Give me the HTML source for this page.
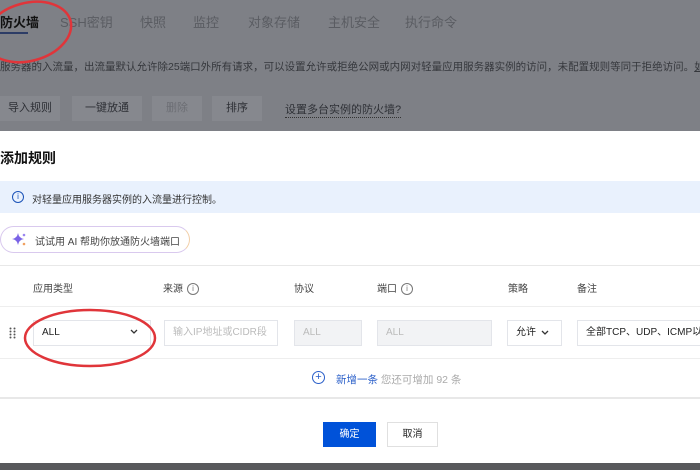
<!DOCTYPE html>
<html><head><meta charset="utf-8"><style>
*{margin:0;padding:0;box-sizing:border-box}
html,body{width:700px;height:470px;overflow:hidden}
body{position:relative;background:#7e8086;font-family:"Liberation Sans","Noto Sans CJK SC",sans-serif;color:#222}
#w{position:absolute;left:0;top:0;width:700px;height:470px;overflow:hidden}
.a{position:absolute;white-space:nowrap}
.tab{top:12px;font-size:13px;color:#5a5c62}
.btn{top:96px;height:25px;background:#86888e;font-size:11px;color:#2e3036;line-height:25px;text-align:center}
.modal{position:absolute;left:0;top:131px;width:700px;height:332px;background:#fff}
.inp{position:absolute;top:320px;height:26px;border:1px solid #e3e5ea;font-size:10px;line-height:24px;padding-left:8px;color:#bbb;overflow:hidden}
.h{top:280px;font-size:10px;color:#444}
.ic{display:inline-block;width:12px;height:12px;border:1px solid #777;border-radius:50%;font-size:8px;line-height:10px;text-align:center;vertical-align:middle;margin-left:4px;color:#777}
</style></head><body><div id="w">
<div class="a tab" style="left:0;color:#111;font-weight:bold">防火墙</div>
<div style="position:absolute;left:0;top:32px;width:28px;height:2px;background:#2c3c66"></div>
<div class="a tab" style="left:60px">SSH密钥</div>
<div class="a tab" style="left:140px">快照</div>
<div class="a tab" style="left:193px">监控</div>
<div class="a tab" style="left:248px">对象存储</div>
<div class="a tab" style="left:328px">主机安全</div>
<div class="a tab" style="left:405px">执行命令</div>
<div class="a" style="left:0;top:59px;font-size:10.5px;color:#35373c">服务器的入流量，出流量默认允许除25端口外所有请求，可以设置允许或拒绝公网或内网对轻量应用服务器实例的访问，未配置规则等同于拒绝访问。<span style="text-decoration:underline">如何配置防火墙</span></div>
<div class="a btn" style="left:0;width:60px">导入规则</div>
<div class="a btn" style="left:72px;width:70px">一键放通</div>
<div class="a btn" style="left:152px;width:50px;color:#6c6e74">删除</div>
<div class="a btn" style="left:212px;width:50px">排序</div>
<div class="a" style="left:285px;top:101px;font-size:11px;color:#2e3036;border-bottom:1px dotted #333">设置多台实例的防火墙?</div>
<div class="modal"></div>
<div class="a" style="left:0;top:148px;font-size:14px;font-weight:bold;color:#111">添加规则</div>
<div class="a" style="left:0;top:181px;width:700px;height:32px;background:#e9f1fd"></div>
<div class="a" style="left:12px;top:191px;width:12px;height:12px;border:1.3px solid #1b53b8;border-radius:50%;font-size:8px;line-height:10px;text-align:center;color:#1b53b8">i</div>
<div class="a" style="left:32px;top:191px;font-size:10px;color:#333">对轻量应用服务器实例的入流量进行控制。</div>
<div class="a" style="left:0;top:226px;width:190px;height:27px;border:1px solid #d9c9ee;border-radius:14px;border-right-color:#f2cfa8"></div>
<svg class="a" style="left:11px;top:232px" width="16" height="16"><path d="M7 1 Q7.8 6.2 13 7 Q7.8 7.8 7 13 Q6.2 7.8 1 7 Q6.2 6.2 7 1Z" fill="#7a63e6"/><circle cx="13" cy="3" r="1.3" fill="#9a86f0"/><circle cx="13" cy="12" r="1.3" fill="#f0a060"/></svg>
<div class="a" style="left:35px;top:233px;font-size:10px;color:#444">试试用 AI 帮助你放通防火墙端口</div>
<div class="a" style="left:0;top:265px;width:700px;height:134px;border-top:1px solid #e8e8e8;border-bottom:2px solid #e8e8e8"></div>
<div class="a" style="left:0;top:306px;width:700px;height:1px;background:#eee"></div>
<div class="a" style="left:0;top:358px;width:700px;height:1px;background:#eee"></div>
<div class="a h" style="left:33px">应用类型</div>
<div class="a h" style="left:163px">来源<span class="ic">i</span></div>
<div class="a h" style="left:294px">协议</div>
<div class="a h" style="left:377px">端口<span class="ic">i</span></div>
<div class="a h" style="left:508px">策略</div>
<div class="a h" style="left:577px">备注</div>
<svg class="a" style="left:9px;top:327px" width="8" height="12"><g fill="#555"><circle cx="1.5" cy="1.5" r="1"/><circle cx="5.5" cy="1.5" r="1"/><circle cx="1.5" cy="4.5" r="1"/><circle cx="5.5" cy="4.5" r="1"/><circle cx="1.5" cy="7.5" r="1"/><circle cx="5.5" cy="7.5" r="1"/><circle cx="1.5" cy="10.5" r="1"/><circle cx="5.5" cy="10.5" r="1"/></g></svg>
<div class="inp" style="left:33px;width:118px;color:#222">ALL</div>
<svg class="a" style="left:130px;top:329px" width="8" height="6"><path d="M1 1 L4 4 L7 1" fill="none" stroke="#333" stroke-width="1.3"/></svg>
<div class="inp" style="left:164px;width:114px">输入IP地址或CIDR段</div>
<div class="inp" style="left:294px;width:68px;background:#f2f3f5">ALL</div>
<div class="inp" style="left:377px;width:115px;background:#f2f3f5">ALL</div>
<div class="inp" style="left:507px;width:55px;color:#222">允许</div>
<svg class="a" style="left:541px;top:330px" width="8" height="6"><path d="M1 1 L4 4 L7 1" fill="none" stroke="#333" stroke-width="1.3"/></svg>
<div class="inp" style="left:577px;width:130px;color:#222">全部TCP、UDP、ICMP以</div>
<div class="a" style="left:312px;top:371px;width:13px;height:13px;border:1.3px solid #2a5fc9;border-radius:50%;font-size:11px;line-height:10px;text-align:center;color:#2a5fc9">+</div>
<div class="a" style="left:336px;top:372px;font-size:10.5px;color:#2a5fc9">新增一条 <span style="color:#aaa">您还可增加 92 条</span></div>
<div class="a" style="left:323px;top:422px;width:53px;height:25px;background:#0052d9;color:#fff;font-size:10px;text-align:center;line-height:25px">确定</div>
<div class="a" style="left:387px;top:422px;width:51px;height:25px;border:1px solid #e0e0e0;font-size:10px;text-align:center;line-height:23px;color:#222">取消</div>
<div class="a" style="left:0;top:463px;width:700px;height:7px;background:#58595c"></div>
<svg class="a" style="left:0;top:0" width="700" height="470">
<ellipse cx="28" cy="32" rx="44" ry="29" transform="rotate(-15 28 32)" fill="none" stroke="#e0353a" stroke-width="2.5"/>
<ellipse cx="90" cy="338" rx="65" ry="28" fill="none" stroke="#e0353a" stroke-width="2.5"/>
</svg>
</div></body></html>
